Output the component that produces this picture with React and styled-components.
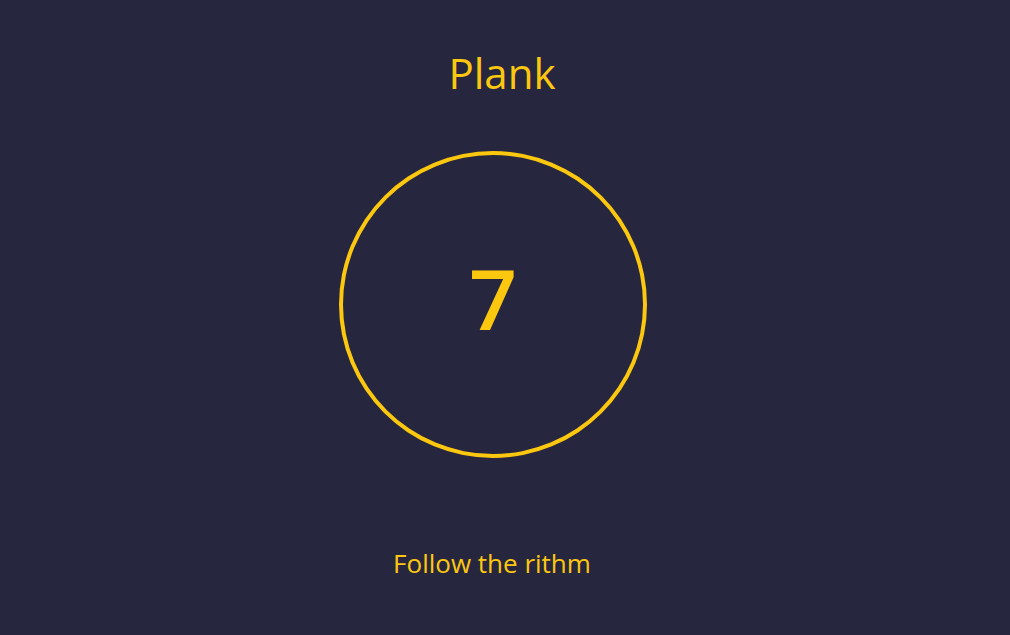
import React from "react"
import styled, { createGlobalStyle } from "styled-components"

const GlobalStyle = createGlobalStyle`
  html, body {
    margin: 0;
    padding: 0;
    background: #27263f;
  }
  body {
    font-family: "Open Sans", "Noto Sans", sans-serif;
  }
`

const yellow = "#fcc70f"

const Page = styled.main`
  width: 1010px;
  height: 635px;
  display: flex;
  flex-direction: column;
  align-items: center;
  color: ${yellow};
`

const Title = styled.h1`
  margin: 45px 6px 0 0;
  font-size: 42px;
  font-weight: 400;
  line-height: 56px;
`

const Timer = styled.div`
  margin: 50px 24px 0 0;
  width: 300px;
  height: 299px;
  border: 4px solid ${yellow};
  border-radius: 50%;
  display: flex;
  align-items: center;
  justify-content: center;
`

const Count = styled.span`
  font-size: 84px;
  font-weight: 600;
  line-height: 1;
  margin-top: -14px;
`

const Hint = styled.p`
  margin: 89px 26px 0 0;
  font-size: 26px;
  line-height: 32px;
`

const App = () => (
  <>
    <GlobalStyle />
    <Page>
      <Title>Plank</Title>
      <Timer>
        <Count>7</Count>
      </Timer>
      <Hint>Follow the rithm</Hint>
    </Page>
  </>
)

export default App
